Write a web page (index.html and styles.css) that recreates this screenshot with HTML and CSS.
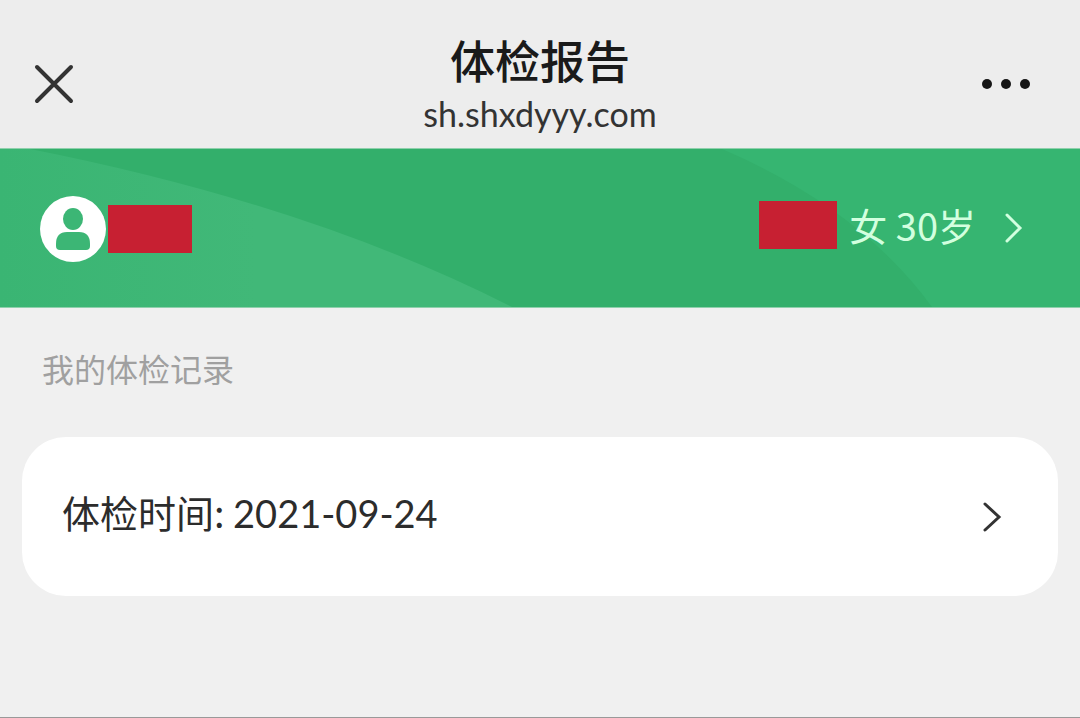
FILE: index.html
```html
<!DOCTYPE html>
<html lang="zh-CN">
<head>
    <meta charset="UTF-8">
    <meta name="viewport" content="width=device-width, initial-scale=1.0">
    <title>体检报告</title>
    <link rel="stylesheet" href="styles.css">
</head>
<body>
    <header class="nav-bar">
        <button type="button" class="icon-btn" aria-label="关闭">
            <svg width="40" height="40" viewBox="0 0 40 40">
                <path d="M3 3L37 37M37 3L3 37" fill="none" stroke="#333" stroke-width="4" stroke-linecap="round"/>
            </svg>
        </button>
        <div class="nav-title">
            <h1>体检报告</h1>
            <p>sh.shxdyyy.com</p>
        </div>
        <button type="button" class="icon-btn more-btn" aria-label="更多">
            <svg width="48" height="12" viewBox="0 0 48 12">
                <circle cx="5" cy="6" r="5" fill="#161616"/>
                <circle cx="24" cy="6" r="5" fill="#161616"/>
                <circle cx="43" cy="6" r="5" fill="#161616"/>
            </svg>
        </button>
    </header>

    <main>
        <section class="banner">
            <svg class="banner-bg" viewBox="0 0 1080 160" preserveAspectRatio="none" aria-hidden="true">
                <defs>
                    <linearGradient id="leftShade" x1="0" y1="0" x2="1" y2="0">
                        <stop offset="0" stop-color="#3ab573"/>
                        <stop offset="0.5" stop-color="#41b878"/>
                    </linearGradient>
                </defs>
                <path d="M0 0H30Q310 56 512 160H0Z" fill="url(#leftShade)"/>
                <path d="M722 0Q860 60 932 160H1080V0Z" fill="#36b571"/>
            </svg>
            <div class="user">
                <svg width="66" height="66" viewBox="0 0 66 66" aria-hidden="true">
                    <circle cx="33" cy="33" r="33" fill="#fff"/>
                    <ellipse cx="33" cy="23" rx="10" ry="11" fill="#3cb675"/>
                    <path d="M16 48Q16 36 27 36H39Q50 36 50 48V50Q50 54 46 54H20Q16 54 16 50Z" fill="#3cb675"/>
                </svg>
                <span class="mask mask-user"></span>
            </div>
            <a href="#" class="patient">
                <span class="mask mask-patient"></span>
                <span class="patient-info">女 30岁</span>
                <svg class="patient-arrow" width="20" height="32" viewBox="0 0 20 32" aria-hidden="true">
                    <path d="M3 3L16 16L3 29" fill="none" stroke="#d2ffdf" stroke-width="3" stroke-linecap="round"/>
                </svg>
            </a>
        </section>

        <section class="records">
            <h2>我的体检记录</h2>
            <a href="#" class="record-card">
                <span class="record-text">体检时间: <time datetime="2021-09-24">2021-09-24</time></span>
                <svg width="20" height="32" viewBox="0 0 20 32" aria-hidden="true">
                    <path d="M3 3L17 16L3 29" fill="none" stroke="#333" stroke-width="3" stroke-linecap="round"/>
                </svg>
            </a>
        </section>
    </main>
</body>
</html>
```
FILE: styles.css
```css
* {
    box-sizing: border-box;
}
body {
    margin: 0;
    min-height: 100vh;
    background-color: #f0f0f0;
    border-bottom: 1px solid #999;
    font-family: "Noto Sans CJK SC", sans-serif;
    color: #2c2c2c;
}
h1, h2, p {
    margin: 0;
}
a {
    color: inherit;
    text-decoration: none;
}
svg {
    display: block;
    flex-shrink: 0;
}

/* Top bar */
.nav-bar {
    display: grid;
    grid-template-columns: 1fr auto 1fr;
    align-items: center;
    padding: 32px 0 12px;
    background-color: #ededed;
}
.icon-btn {
    display: flex;
    justify-self: start;
    margin: 0 34px;
    padding: 0;
    border: none;
    background: none;
    cursor: pointer;
}
.more-btn {
    justify-self: end;
    margin: 0 50px;
}
.nav-title {
    text-align: center;
}
.nav-title h1 {
    font-size: 45px;
    font-weight: 500;
    line-height: 56px;
    color: #1a1a1a;
}
.nav-title p {
    margin-top: 4px;
    font-family: Lato, sans-serif;
    font-size: 34px;
    line-height: 44px;
    color: #333;
}

/* Green banner */
.banner {
    position: relative;
    display: flex;
    justify-content: space-between;
    align-items: center;
    height: 160px;
    padding: 0 56px 0 40px;
    background-color: #33af6b;
    border-top: 1px solid #8fd0ac;
    border-bottom: 1px solid #8fd0ac;
}
.banner-bg {
    position: absolute;
    top: 0;
    left: 0;
    width: 100%;
    height: 100%;
}
.user, .patient {
    position: relative;
    display: flex;
    align-items: center;
}
.user {
    gap: 2px;
    padding-top: 2px;
}
.patient {
    gap: 12px;
    padding-bottom: 6px;
    font-size: 38px;
    line-height: 48px;
    color: #d2ffdf;
}
.patient-arrow {
    margin-top: 6px;
    margin-left: 16px;
}
.mask {
    background-color: #c72032;
}
.mask-user {
    width: 84px;
    height: 48px;
}
.mask-patient {
    width: 78px;
    height: 48px;
}

/* Record list */
.records {
    padding: 36px 22px;
}
.records h2 {
    padding: 0 20px;
    margin-bottom: 45px;
    font-size: 32px;
    font-weight: 400;
    line-height: 48px;
    color: #a0a0a0;
}
.record-card {
    display: flex;
    justify-content: space-between;
    align-items: center;
    padding: 49px 56px 49px 40px;
    border-radius: 44px;
    background-color: #fff;
    font-size: 38px;
    line-height: 52px;
}
.record-text {
    padding-bottom: 8px;
}
.record-card time {
    font-family: Lato, "Noto Sans CJK SC", sans-serif;
}
```
